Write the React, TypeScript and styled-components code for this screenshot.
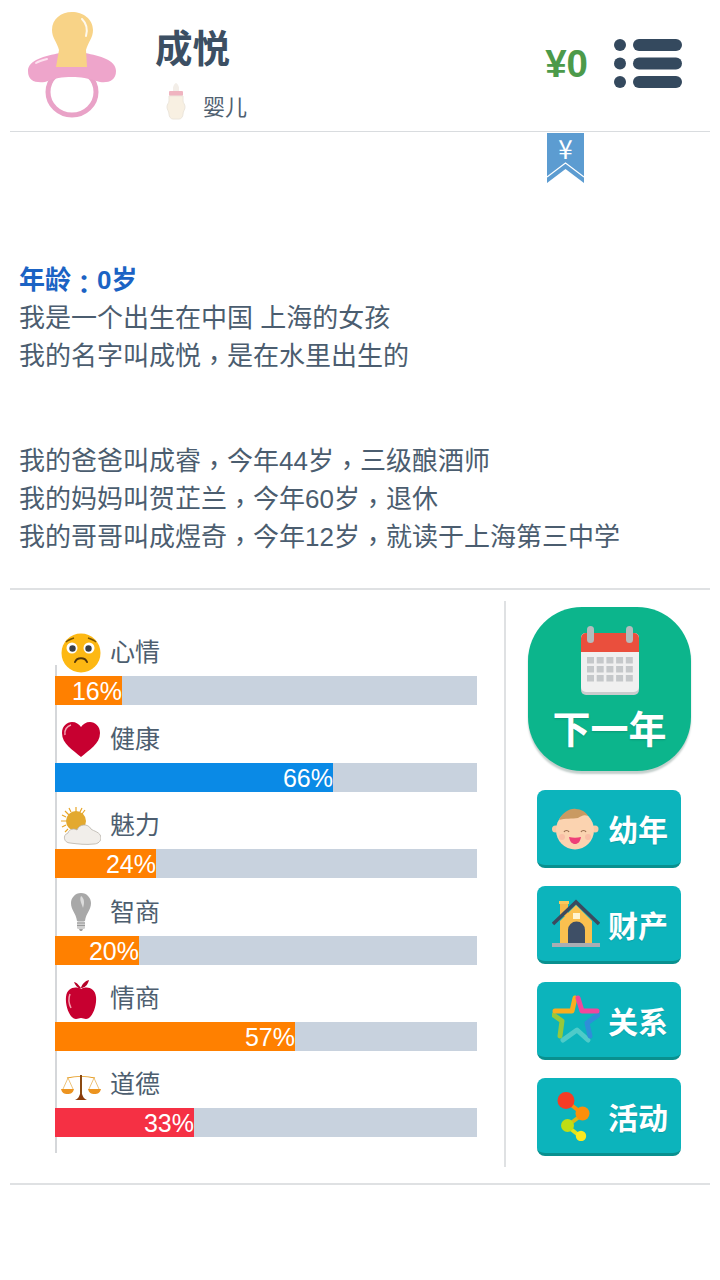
import React from 'react';
import styled, { createGlobalStyle } from 'styled-components';

const GlobalStyle = createGlobalStyle`
  html, body {
    margin: 0;
    padding: 0;
    background: #fff;
    font-family: "Liberation Sans", "Noto Sans CJK SC", sans-serif;
  }
`;

const Page = styled.div`
  width: 720px;
  height: 1280px;
  overflow: hidden;
  position: relative;
  color: #4a5b6c;
`;

const Header = styled.header`
  height: 131px;
  margin: 0 10px;
  border-bottom: 1px solid #d9dcdf;
  display: flex;
  align-items: flex-start;
`;

const Avatar = styled.div`
  width: 90px;
  margin: 10px 0 0 17px;
  line-height: 0;
`;

const Identity = styled.div`
  margin: 25px 0 0 38px;
  flex: 1;
`;

const Name = styled.div`
  font-size: 37.5px;
  font-weight: 700;
  line-height: 48px;
  color: #3c4f63;
`;

const Stage = styled.div`
  display: flex;
  align-items: flex-start;
  margin: 9px 0 0 10px;
  font-size: 22px;
  line-height: 40px;
  color: #4f6070;
  gap: 16px;
`;

const StageLabel = styled.span`
  margin-top: 6px;
`;

const Money = styled.div`
  font-size: 38.5px;
  font-weight: 700;
  color: #4c9a4a;
  line-height: 44px;
  margin: 42px 26px 0 0;
`;

const MenuIcon = styled.div`
  margin: 38px 28px 0 0;
  line-height: 0;
`;

const Bookmark = styled.div`
  position: absolute;
  left: 547px;
  top: 133px;
  width: 37px;
  height: 51px;
  line-height: 0;
`;

const BookmarkSign = styled.span`
  position: absolute;
  left: 0;
  right: 0;
  top: 15px;
  text-align: center;
  font-size: 26px;
  color: #fff;
  font-family: "Noto Sans CJK SC", sans-serif;
  font-weight: 400;
`;

const Story = styled.section`
  height: 458px;
  margin: 0 10px;
  padding: 130px 10px 0 9px;
  box-sizing: border-box;
  border-bottom: 2px solid #dfe1e3;
  font-size: 26px;
  line-height: 37.8px;
  color: #4b5d6f;
`;

const Age = styled.div`
  color: #1b63c4;
  font-weight: 700;
`;

const Paragraph = styled.p`
  margin: 0 0 68px;
`;

// the reference sets its full-width punctuation centred in the cell
const Punct = styled.span`
  font-family: "Noto Sans CJK TC", sans-serif;
  line-height: 0;
  vertical-align: -5px;
`;

const Panel = styled.section`
  margin: 11px 10px 0;
  height: 582px;
  border-bottom: 2px solid #dfe1e3;
  display: flex;
  align-items: flex-start;
`;

const StatsColumn = styled.div`
  width: 496px;
  height: 566px;
  box-sizing: border-box;
  border-right: 2px solid #dfe1e3;
  padding: 32.4px 27px 0 45px;
`;

const StatList = styled.div`
  position: relative;
  height: 520px;

  &::before {
    content: '';
    position: absolute;
    left: 0;
    top: 32px;
    bottom: 0;
    width: 2px;
    background: #d5d7da;
  }
`;

const Stat = styled.div`
  position: relative;
  height: 86.4px;
`;

const StatHead = styled.div`
  height: 43px;
  box-sizing: border-box;
  padding: 0 0 5px 6px;
  display: flex;
  align-items: center;
  gap: 9px;
  font-size: 25px;
  color: #4d5e6f;
`;

const StatLabel = styled.span`
  margin-bottom: 4px;
`;

const StatIcon = styled.div`
  width: 40px;
  height: 40px;
  margin-top: 2px;
  line-height: 0;
`;

const Track = styled.div`
  height: 29px;
  background: #c8d2de;
`;

const Fill = styled.div<{ $color: string }>`
  height: 100%;
  background: ${p => p.$color};
  color: #fff;
  font-size: 25px;
  line-height: 31px;
  text-align: right;
  white-space: nowrap;
`;

const ActionColumn = styled.div`
  flex: 1;
  display: flex;
  flex-direction: column;
  align-items: center;
  padding: 6px 0 0 2px;
  gap: 18px;
`;

const NextYear = styled.button`
  width: 163px;
  height: 164px;
  border: 0;
  padding: 18px 0 0;
  margin: 0 0 1px 1px;
  border-radius: 54px;
  background: #0cb58c;
  box-shadow: 0 3px 2px #c4cfcc;
  display: flex;
  flex-direction: column;
  align-items: center;
  color: #fff;
  font: 700 38px/50px "Noto Sans CJK SC", sans-serif;
  text-shadow: 0 1px 2px rgba(0, 0, 0, 0.15);
`;

const NextYearLabel = styled.span`
  margin-top: 7px;
`;

const Action = styled.button`
  width: 144px;
  height: 78px;
  box-sizing: border-box;
  border: 0;
  border-bottom: 3px solid #09908f;
  border-radius: 8px;
  padding: 0 0 0 15px;
  background: #0cb4bc;
  display: flex;
  align-items: center;
  gap: 8px;
  color: #fff;
  font: 700 30px/40px "Noto Sans CJK SC", sans-serif;
  text-shadow: 0 1px 1px rgba(0, 0, 0, 0.12);
`;

const ActionIcon = styled.span`
  width: 48px;
  height: 50px;
  line-height: 0;
  flex: none;
`;

const Pacifier = () => (
  <svg width="90" height="108" viewBox="0 0 90 108">
    <ellipse cx="45" cy="82" rx="24" ry="23" fill="none" stroke="#e9a2c7" strokeWidth="5" />
    <path d="M1 61C1 50 18 46 33 43h25c15 3 31 7 31 18 0 10-8 12-16 11-12-4-20-5-28-5-10 0-17 1-27 5-10 1-17-1-17-11z" fill="#eea5cb" />
    <path d="M9 53c3-2 7-3 11-4" stroke="#fde3f0" strokeWidth="2" fill="none" strokeLinecap="round" />
    <path d="M29 57l3-17c-2-8-7-12-7-20C25 9 34 2 45 2s21 7 21 18c0 8-5 12-7 20l1 17z" fill="#f8d387" />
    <path d="M55 9c4 4 6 10 4 17" stroke="#fff" strokeWidth="2" fill="none" strokeLinecap="round" opacity=".85" />
  </svg>
);

const Bottle = () => (
  <svg width="22" height="38" viewBox="0 0 22 38">
    <path d="M8 6c0-2 2-5 3-5s3 3 3 5v3H8z" fill="#f3eee8" />
    <rect x="4" y="9" width="14" height="5" rx="1" fill="#f0b4c0" />
    <path d="M4 14h14v5c0 2 2 3 2 6s-2 4-2 7c0 3-2 5-4 5H8c-2 0-4-2-4-5 0-3-2-4-2-7s2-4 2-6z" fill="#f8f0e2" stroke="#ece6dc" />
  </svg>
);

const Menu = () => (
  <svg width="68" height="52" viewBox="0 0 68 52" fill="#34495e">
    <circle cx="6" cy="7" r="6" />
    <circle cx="6" cy="25.5" r="6" />
    <circle cx="6" cy="44" r="6" />
    <rect x="19" y="1" width="49" height="12" rx="6" />
    <rect x="19" y="19.5" width="49" height="12" rx="6" />
    <rect x="19" y="38" width="49" height="12" rx="6" />
  </svg>
);

const Ribbon = () => (
  <svg width="37" height="51" viewBox="0 0 37 51">
    <path d="M0 0h37v50L18.500 36 0 50z" fill="#5c9cd1" />
    <path d="M0 44l18.500-14L37 44" fill="none" stroke="#fff" strokeWidth="1.200" />
  </svg>
);

const Sad = () => (
  <svg width="40" height="40" viewBox="0 0 40 40">
    <circle cx="20" cy="20" r="19.500" fill="#fdb813" />
    <circle cx="11" cy="15" r="5.500" fill="#fff" />
    <circle cx="28" cy="15" r="5.500" fill="#fff" />
    <circle cx="11.500" cy="15.500" r="3.200" fill="#3a3f45" />
    <circle cx="27.500" cy="15.500" r="3.200" fill="#3a3f45" />
    <path d="M5 9c2-2 5-3 8-4M35 9c-2-2-5-3-8-4" stroke="#7a5500" strokeWidth="1.500" fill="none" />
    <path d="M14 29c2-5 10-5 12 0" stroke="#54370a" strokeWidth="2" fill="none" strokeLinecap="round" />
  </svg>
);

const Heart = () => (
  <svg width="40" height="40" viewBox="0 0 40 40">
    <path d="M20 37C12 30 1 24 1 13 1 6 6 2 11 2c4 0 7 2 9 5 2-3 5-5 9-5 5 0 10 4 10 11 0 11-11 17-19 24z" fill="#c70030" />
    <path d="M4 15c-1-5 2-9 6-10" stroke="#f4a5b6" strokeWidth="1.500" fill="none" />
  </svg>
);

const Weather = () => (
  <svg width="40" height="40" viewBox="0 0 40 40">
    <g stroke="#e8a628" strokeWidth="1.200">
      <path d="M15 1v5M4 5l4 4M0 15h5M4 26l3-3M24 4l-3 4M8 2l2 4M21 2l-2 4M1 9l4 2M1 21l4-2" />
    </g>
    <circle cx="15" cy="15" r="10" fill="#e3a92f" />
    <path d="M9 37c-6 0-8-8-2-10 1-4 6-5 9-3 2-6 11-7 14-1 2 2 10 3 10 9 0 3-3 6-7 6-8 1-16 0-24-1z" fill="#f1eeea" stroke="#b8b2aa" strokeWidth=".8" />
  </svg>
);

const Bulb = () => (
  <svg width="40" height="40" viewBox="0 0 40 40">
    <path d="M20 0c6 0 10 5 10 10 0 7-5 10-6 18h-8c-1-8-6-11-6-18C10 5 14 0 20 0z" fill="#a8a8a8" />
    <path d="M20 3c3 2 4 6 2 12-1-4-4-8-2-12z" fill="#dcdcdc" />
    <rect x="16" y="28" width="8" height="8" rx="1.500" fill="#cfcfcf" />
    <path d="M16 30h8M16 32.500h8" stroke="#8a8a8a" strokeWidth=".8" />
    <path d="M18 36h4l-1 2h-2z" fill="#a0a0a0" />
  </svg>
);

const Apple = () => (
  <svg width="40" height="42" viewBox="0 0 40 42">
    <path d="M20 9c-3-4-5-6-7-6 1 3 3 5 6 7zM20 9c1-4 4-7 8-8-1 4-3 7-7 8z" fill="#b50027" />
    <path d="M20 10c5-3 14-2 15 8 1 9-4 22-10 22-2 0-3-1-5-1s-3 1-5 1C9 40 4 27 5 18c1-10 10-11 15-8z" fill="#c70030" />
    <path d="M9 15c-2 5-1 10 1 14" stroke="#f3a0b0" strokeWidth="1.500" fill="none" />
  </svg>
);

const Scale = () => (
  <svg width="40" height="40" viewBox="0 0 40 40">
    <path d="M6 13c8-2 20-2 28 0" stroke="#e59a1f" strokeWidth="1.200" fill="none" />
    <path d="M7 13l-5 11M7 13l5 11M33 13l-5 11M33 13l5 11" stroke="#e9b458" strokeWidth=".8" />
    <path d="M0 24h13c-1 4-3 5-6.500 5S1 28 0 24zM27 24h13c-1 4-3 5-6.500 5S28 28 27 24z" fill="#ec9420" />
    <path d="M19 10h2v20h-2z" fill="#8b4a12" />
    <path d="M14 35c3-1 4-3 5-6h2c1 3 2 5 5 6z" fill="#8b3d0c" />
  </svg>
);

const Calendar = () => (
  <svg width="60" height="70" viewBox="0 0 60 70">
    <rect x="1" y="8" width="58" height="62" rx="5" fill="#c9cccd" />
    <rect x="1" y="8" width="58" height="59" rx="5" fill="#f0f0f0" />
    <path d="M1 27V13a5 5 0 0 1 5-5h48a5 5 0 0 1 5 5v14z" fill="#ea4f3d" />
    <rect x="7" y="1" width="7" height="17" rx="3.500" fill="#b5bcbd" />
    <rect x="46" y="1" width="7" height="17" rx="3.500" fill="#b5bcbd" />
    <g fill="#c5c8ca">
      {[0, 1, 2].map(r => [0, 1, 2, 3, 4].map(c => (
        <rect key={`${r}-${c}`} x={7 + c * 9.7} y={32 + r * 9} width="7" height="6.500" />
      )))}
    </g>
  </svg>
);

const Baby = () => (
  <svg width="48" height="50" viewBox="0 0 48 50">
    <circle cx="3.500" cy="26" r="3.500" fill="#f8caa6" />
    <circle cx="43" cy="26" r="3.500" fill="#f8caa6" />
    <ellipse cx="23" cy="27" rx="19" ry="19.500" fill="#fbd3b0" />
    <path d="M7 17C11 9 18 5 24 6c5 0 10 3 12 7-4-2-7 0-10 2-6 1-13 0-19 2z" fill="#c99a62" />
    <path d="M12 29c1-2 4-2 5 0M29 29c1-2 4-2 5 0" stroke="#9a7050" strokeWidth="1.200" fill="none" />
    <circle cx="10" cy="34" r="3" fill="#f9bfa6" />
    <circle cx="36" cy="34" r="3" fill="#f9bfa6" />
    <path d="M17 34c4 1 8 1 12 0-1 5-3 7-6 7s-5-2-6-7z" fill="#ee3f78" />
  </svg>
);

const House = () => (
  <svg width="48" height="50" viewBox="0 0 48 50">
    <rect x="8" y="3" width="8" height="14" fill="#f7b84b" />
    <rect x="7" y="2" width="10" height="3" fill="#fbc85e" />
    <path d="M24 6L8 22v22h32V22z" fill="#fac04f" />
    <path d="M1 25L24 3l23 22" fill="none" stroke="#3c4a5e" strokeWidth="3.500" />
    <path d="M16 44V31a8.500 8.500 0 0 1 17 0v13z" fill="#3e4f66" />
    <rect x="21" y="14" width="7" height="6" fill="#fff3d0" />
    <rect x="0" y="44" width="48" height="4" fill="#a9adb3" />
  </svg>
);

const Star = () => (
  <svg width="48" height="50" viewBox="0 0 48 50" fill="none" strokeWidth="5" strokeLinecap="round" strokeLinejoin="round">
    <path d="M11 45l14-10 11 10" stroke="#4fcbc9" />
    <path d="M1.500 20l8.500 6-2 15" stroke="#96c83c" />
    <path d="M46 20l-11 8 3 13" stroke="#2f8ed8" />
    <path d="M23 3l-3 13H3" stroke="#fbad1e" />
    <path d="M26 3l4 13h15" stroke="#f0479d" />
  </svg>
);

const Dots = () => (
  <svg width="48" height="50" viewBox="0 0 48 50" fill="none" strokeWidth="4">
    <path d="M14 10l17 13" stroke="#fb8f0a" />
    <path d="M31 23L15 35" stroke="#d8b818" />
    <path d="M15 35l14 11" stroke="#e2e21a" />
    <circle cx="14" cy="9.500" r="8.500" fill="#f53c25" />
    <circle cx="30.500" cy="22.500" r="7" fill="#fb8f0a" />
    <circle cx="15.500" cy="34.500" r="6.500" fill="#c0dd15" />
    <circle cx="29" cy="45" r="5.200" fill="#fbe91e" />
  </svg>
);

const stats = [
  { label: '心情', value: 16, width: 67, color: '#ff8000', icon: <Sad /> },
  { label: '健康', value: 66, width: 278, color: '#0a8ae6', icon: <Heart /> },
  { label: '魅力', value: 24, width: 101, color: '#ff8000', icon: <Weather /> },
  { label: '智商', value: 20, width: 84, color: '#ff8000', icon: <Bulb /> },
  { label: '情商', value: 57, width: 240, color: '#ff8000', icon: <Apple /> },
  { label: '道德', value: 33, width: 139, color: '#f53044', icon: <Scale /> },
];

const actions = [
  { label: '幼年', icon: <Baby /> },
  { label: '财产', icon: <House /> },
  { label: '关系', icon: <Star /> },
  { label: '活动', icon: <Dots /> },
];

export default function App() {
  return (
    <Page>
      <GlobalStyle />
      <Header>
        <Avatar><Pacifier /></Avatar>
        <Identity>
          <Name>成悦</Name>
          <Stage><Bottle /><StageLabel>婴儿</StageLabel></Stage>
        </Identity>
        <Money>¥0</Money>
        <MenuIcon><Menu /></MenuIcon>
      </Header>
      <Bookmark>
        <Ribbon />
        <BookmarkSign>¥</BookmarkSign>
      </Bookmark>
      <Story>
        <Paragraph>
          <Age>年龄<Punct>：</Punct>0岁</Age>
          我是一个出生在中国 上海的女孩<br />
          我的名字叫成悦<Punct>，</Punct>是在水里出生的
        </Paragraph>
        <div>
          我的爸爸叫成睿<Punct>，</Punct>今年44岁<Punct>，</Punct>三级酿酒师<br />
          我的妈妈叫贺芷兰<Punct>，</Punct>今年60岁<Punct>，</Punct>退休<br />
          我的哥哥叫成煜奇<Punct>，</Punct>今年12岁<Punct>，</Punct>就读于上海第三中学
        </div>
      </Story>
      <Panel>
        <StatsColumn>
          <StatList>
            {stats.map(s => (
              <Stat key={s.label}>
                <StatHead>
                  <StatIcon>{s.icon}</StatIcon>
                  <StatLabel>{s.label}</StatLabel>
                </StatHead>
                <Track>
                  <Fill $color={s.color} style={{ width: s.width }}>{s.value}%</Fill>
                </Track>
              </Stat>
            ))}
          </StatList>
        </StatsColumn>
        <ActionColumn>
          <NextYear>
            <Calendar />
            <NextYearLabel>下一年</NextYearLabel>
          </NextYear>
          {actions.map(a => (
            <Action key={a.label}>
              <ActionIcon>{a.icon}</ActionIcon>
              {a.label}
            </Action>
          ))}
        </ActionColumn>
      </Panel>
    </Page>
  );
}
